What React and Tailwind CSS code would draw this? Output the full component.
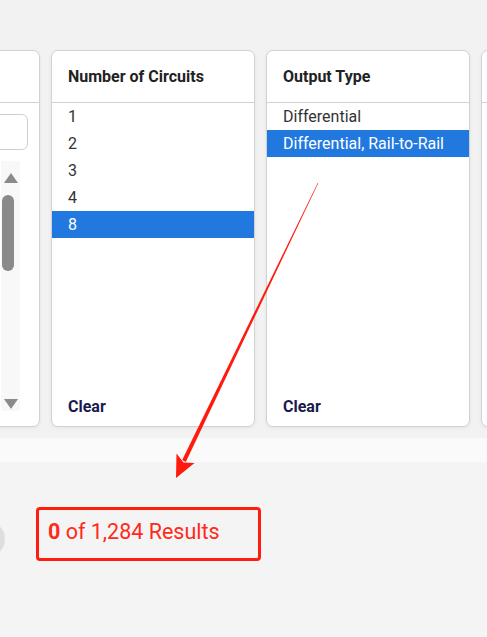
const PANELS = [
    { title: 'Number of Circuits', items: ['1', '2', '3', '4', '8'], selected: '8' },
    { title: 'Output Type', items: ['Differential', 'Differential, Rail-to-Rail'], selected: 'Differential, Rail-to-Rail' },
]

function FilterPanel({ title, items, selected, clear = true }) {
    return (
        <div className="w-[204px] h-[377px] shrink-0 bg-white border border-[#d2d2d2] rounded-[7px] shadow-[0_1px_4px_rgba(0,0,0,0.06)] flex flex-col overflow-hidden">
            <div className="h-[52px] shrink-0 flex items-center px-[16px] border-b border-[#d2d2d2]">
                <span className="text-[16px] font-bold text-[#222]">{title}</span>
            </div>
            <div className="flex-1">
                {items.map(item => (
                    <div
                        key={item}
                        className={`h-[27px] flex items-center px-[16px] pt-[1px] text-[16px] ${item === selected ? 'bg-[#2179df] text-white' : 'text-[#333]'}`}
                    >
                        {item}
                    </div>
                ))}
            </div>
            {clear && (
                <div className="px-[16px] pb-[7px]">
                    <span className="text-[16px] font-bold text-[#1b1a4d]">Clear</span>
                </div>
            )}
        </div>
    )
}

function SearchPanel() {
    return (
        <div className="w-[205px] h-[377px] shrink-0 bg-white border border-[#d2d2d2] rounded-[7px] shadow-[0_1px_4px_rgba(0,0,0,0.06)] flex flex-col overflow-hidden">
            <div className="h-[52px] shrink-0 border-b border-[#d2d2d2]" />
            <div className="px-[11px] pt-[11px]">
                <div className="h-[36px] border border-[#cfcfcf] rounded-[6px]" />
            </div>
            <div className="flex-1 flex justify-end pr-[19px] pt-[11px] pb-[15px]">
                <div className="w-[19px] bg-[#f8f8f8] flex flex-col items-center pt-[12px] pb-[2px]">
                    <div className="w-0 h-0 border-l-[7px] border-r-[7px] border-b-[10px] border-l-transparent border-r-transparent border-b-[#8a8a8a]" />
                    <div className="mt-[12px] w-[12px] h-[76px] rounded-full bg-[#8a8a8a] self-start ml-[1px]" />
                    <div className="flex-1" />
                    <div className="w-0 h-0 border-l-[7px] border-r-[7px] border-t-[10px] border-l-transparent border-r-transparent border-t-[#8a8a8a]" />
                </div>
            </div>
        </div>
    )
}

export default function App() {
    return (
        <div className="relative w-[487px] h-[637px] overflow-hidden bg-[#f4f4f4] font-['Roboto',sans-serif]">
            <div className="pt-[50px] h-[438px] bg-[#f2f2f2]">
                <div className="flex gap-[11px] -ml-[165px]">
                    <SearchPanel />
                    {PANELS.map(p => <FilterPanel key={p.title} {...p} />)}
                    <FilterPanel title="" items={[]} selected="" clear={false} />
                </div>
            </div>
            <div className="h-[24px] bg-[#fafafa]" />

            <div className="flex items-center gap-[31px] -ml-[31px] mt-[45px]">
                <div className="w-[36px] h-[36px] mt-[10px] rounded-full bg-[#dedede]" />
                <div className="w-[225px] h-[54px] border-[3px] border-[#ff1d10] rounded-[4px] flex items-center pl-[9px] pb-[3px]">
                    <span className="text-[21.5px] text-[#ff2a1a]">
                        <span className="font-bold">0</span> of 1,284 Results
                    </span>
                </div>
            </div>

            {/* annotation arrow */}
            <svg className="absolute inset-0 pointer-events-none" width="487" height="637" viewBox="0 0 487 637">
                <polygon
                    fill="#ff1a0e"
                    points="318.3,183.1 317.7,182.9 182.2,460.1 185.8,461.9"
                />
                <polygon
                    fill="#ff1a0e"
                    points="176,478 176.5,453.5 183.5,462.5 194.5,463"
                />
            </svg>
        </div>
    )
}
